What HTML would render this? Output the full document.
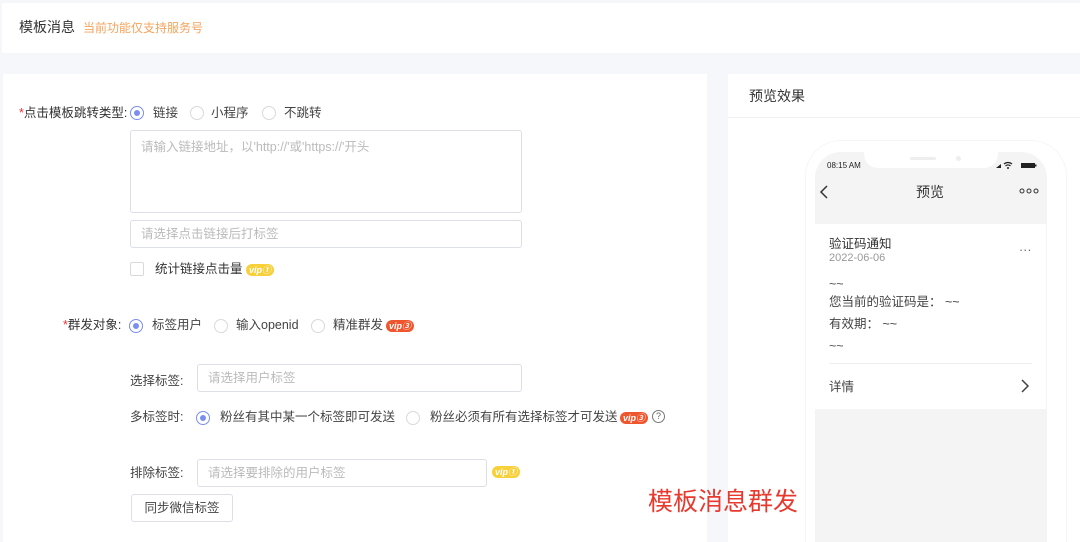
<!DOCTYPE html>
<html><head><meta charset="utf-8"><style>
*{box-sizing:border-box;margin:0;padding:0}
body{width:1080px;height:542px;overflow:hidden;background:#f6f7fb;font-family:"Liberation Sans","Noto Sans CJK SC",sans-serif;font-size:12.5px;color:#555;position:relative}
.abs{position:absolute}
.hdr{left:2px;top:3px;width:1078px;height:50px;background:#fff}
.lp{left:3px;top:74px;width:704px;height:468px;background:#fff}
.rp{left:728px;top:74px;width:352px;height:468px;background:#fff}
.radio{position:absolute;width:14px;height:14px;border:1px solid #d9d9d9;border-radius:50%;background:#fff}
.radio.on{border-color:#7b8ef0}
.radio.on::after{content:"";position:absolute;left:3px;top:3px;width:6px;height:6px;border-radius:50%;background:#7b8ef0}
.inp{position:absolute;border:1px solid #dcdfe6;border-radius:3px;color:#bbb;padding-left:10px;font-size:12.5px}
.vip{position:absolute;height:12px;border-radius:6px;font-size:9px;font-weight:bold;color:#fff;padding:0 3px;line-height:12px;font-style:italic}
.t{position:absolute;white-space:nowrap;line-height:1.25;margin-top:1px}
</style></head><body>
<div class="abs hdr"></div>
<div class="t" style="left:19px;top:18px;font-size:14px;color:#333">模板消息</div>
<div class="t" style="left:83px;top:20px;font-size:12px;color:#f5a35c">当前功能仅支持服务号</div>

<div class="abs lp"></div>
<div class="abs rp"></div>
<div class="t" style="left:19px;top:105px;color:#333"><span style="color:#e33">*</span>点击模板跳转类型:</div>
<div class="radio on" style="left:130px;top:106px"></div><div class="t" style="left:153px;top:105px;color:#444">链接</div>
<div class="radio" style="left:190px;top:106px"></div><div class="t" style="left:211px;top:105px;color:#444">小程序</div>
<div class="radio" style="left:262px;top:106px"></div><div class="t" style="left:284px;top:105px;color:#444">不跳转</div>
<div class="inp" style="left:130px;top:130px;width:392px;height:83px;padding-top:5px">请输入链接地址，以'http://'或'https://'开头</div>
<div class="inp" style="left:130px;top:220px;width:392px;height:28px;line-height:26px">请选择点击链接后打标签</div>
<div class="abs" style="left:130px;top:262px;width:14px;height:14px;border:1px solid #d9d9d9;border-radius:2px"></div>
<div class="t" style="left:155px;top:261px;color:#333">统计链接点击量</div>
<div class="vip" style="left:246px;top:264px;background:#f7d03a">vip①</div>

<div class="t" style="left:63px;top:317px;color:#333"><span style="color:#e33">*</span>群发对象:</div>
<div class="radio on" style="left:129px;top:319px"></div><div class="t" style="left:152px;top:317px;color:#444">标签用户</div>
<div class="radio" style="left:214px;top:319px"></div><div class="t" style="left:236px;top:317px;color:#444">输入openid</div>
<div class="radio" style="left:311px;top:319px"></div><div class="t" style="left:333px;top:317px;color:#444">精准群发</div>
<div class="vip" style="left:386px;top:320px;background:#f0562e">vip③</div>

<div class="t" style="left:130px;top:373px;color:#444">选择标签:</div>
<div class="inp" style="left:197px;top:364px;width:325px;height:28px;line-height:26px">请选择用户标签</div>
<div class="t" style="left:130px;top:409px;color:#444">多标签时:</div>
<div class="radio on" style="left:196px;top:411px"></div><div class="t" style="left:220px;top:409px;color:#444">粉丝有其中某一个标签即可发送</div>
<div class="radio" style="left:406px;top:411px"></div><div class="t" style="left:430px;top:409px;color:#444">粉丝必须有所有选择标签才可发送</div>
<div class="vip" style="left:620px;top:412px;background:#f0562e">vip③</div>
<div class="abs" style="left:652px;top:410px;width:13px;height:13px;border:1px solid #777;border-radius:50%;font-size:9px;text-align:center;line-height:11px;color:#666">?</div>

<div class="t" style="left:130px;top:465px;color:#444">排除标签:</div>
<div class="inp" style="left:197px;top:459px;width:290px;height:28px;line-height:26px">请选择要排除的用户标签</div>
<div class="vip" style="left:492px;top:466px;background:#f7d03a">vip①</div>
<div class="abs" style="left:131px;top:494px;width:102px;height:28px;border:1px solid #dcdfe6;border-radius:3px;text-align:center;line-height:26px;color:#444">同步微信标签</div>

<div class="t" style="left:749px;top:87px;font-size:14px;color:#333">预览效果</div>
<div class="abs" style="left:728px;top:117px;width:352px;height:1px;background:#f0f0f0"></div>
<div class="abs" style="left:805px;top:140px;width:262px;height:402px;border:1px solid #f6f6f6;border-bottom:none;border-radius:36px 36px 0 0"></div>
<div class="abs" style="left:815px;top:152px;width:232px;height:390px;background:#f4f4f4;border-radius:26px 26px 0 0"></div>
<div class="abs" style="left:864px;top:150px;width:134px;height:18px;background:#fff;border-radius:0 0 14px 14px"></div>
<div class="abs" style="left:910px;top:157px;width:26px;height:3px;background:#eee;border-radius:2px"></div>
<div class="abs" style="left:956px;top:156px;width:5px;height:5px;background:#eee;border-radius:50%"></div>
<div class="t" style="left:827px;top:160px;font-size:8px;color:#222">08:15 AM</div>
<svg class="abs" style="left:995px;top:160px" width="44" height="10" viewBox="0 0 44 10"><path d="M1 8h5V4z" fill="#222"/><path d="M9 4a6 6 0 0 1 8 0M10.5 6a3.5 3.5 0 0 1 5 0" stroke="#222" stroke-width="1.2" fill="none"/><circle cx="13" cy="8" r="1" fill="#222"/><rect x="26" y="3" width="14" height="5" fill="#222"/><rect x="40" y="4.5" width="1.5" height="2" fill="#222"/></svg>
<svg class="abs" style="left:819px;top:185px" width="10" height="14"><path d="M8 1L2 7l6 6" stroke="#333" stroke-width="1.5" fill="none"/></svg>
<div class="t" style="left:916px;top:183px;font-size:14px;color:#333">预览</div>
<svg class="abs" style="left:1019px;top:188px" width="20" height="6"><g stroke="#333" stroke-width="1" fill="none"><circle cx="3" cy="3" r="2"/><circle cx="10" cy="3" r="2"/><circle cx="17" cy="3" r="2"/></g></svg>
<div class="abs" style="left:815px;top:224px;width:231px;height:185px;background:#fff"></div>
<div class="t" style="left:829px;top:236px;color:#333">验证码通知</div>
<div class="t" style="left:829px;top:251px;font-size:11px;color:#999">2022-06-06</div>
<div class="t" style="left:1019px;top:242px;color:#666">···</div>
<div class="t" style="left:829px;top:276px;color:#555">~~</div>
<div class="t" style="left:829px;top:294px;color:#444">您当前的验证码是： ~~</div>
<div class="t" style="left:829px;top:316px;color:#444">有效期： ~~</div>
<div class="t" style="left:829px;top:338px;color:#555">~~</div>
<div class="abs" style="left:829px;top:363px;width:203px;height:1px;background:#eee"></div>
<div class="t" style="left:829px;top:379px;color:#444">详情</div>
<svg class="abs" style="left:1020px;top:379px" width="10" height="14"><path d="M2 1l6 6-6 6" stroke="#444" stroke-width="1.5" fill="none"/></svg>
<div class="t" style="left:648px;top:486px;font-size:25px;color:#e8392f;z-index:5">模板消息群发</div>
</body></html>
